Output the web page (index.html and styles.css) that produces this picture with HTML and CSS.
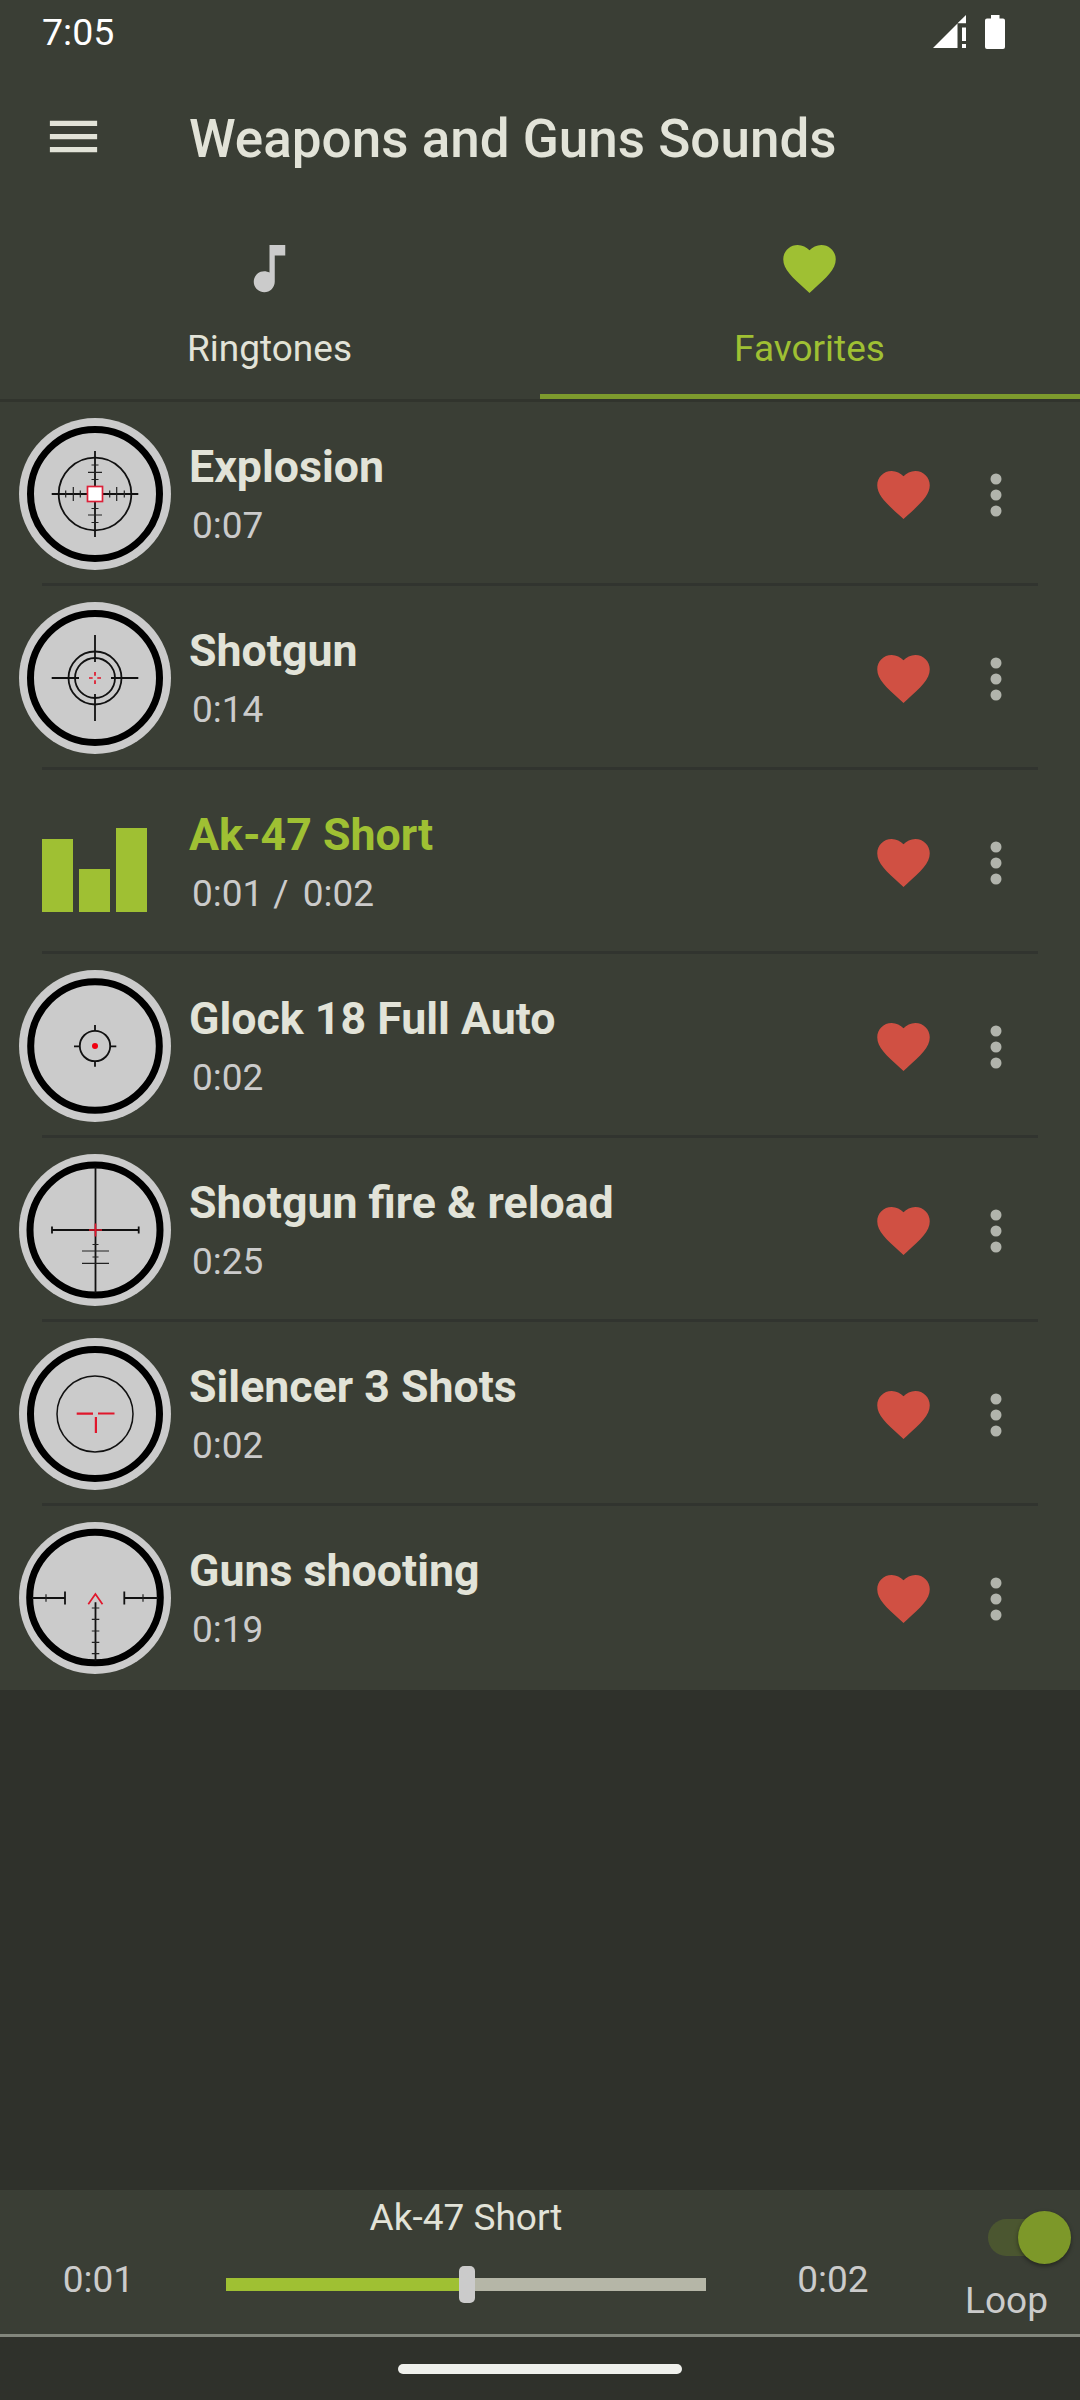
FILE: index.html
```html
<!DOCTYPE html>
<html lang="en">
<head>
<meta charset="utf-8">
<title>Weapons and Guns Sounds</title>
<link rel="stylesheet" href="styles.css">
</head>
<body>
<svg class="defs" width="0" height="0">
  <symbol id="heart" viewBox="0 0 24 24"><path d="M12 21.35l-1.45-1.32C5.4 15.36 2 12.28 2 8.5 2 5.42 4.42 3 7.5 3c1.74 0 3.41.81 4.5 2.09C13.09 3.81 14.76 3 16.5 3 19.58 3 22 5.42 22 8.5c0 3.78-3.4 6.86-8.55 11.54L12 21.35z"/></symbol>
  <symbol id="more" viewBox="0 0 12 44"><circle cx="6" cy="6" r="5.5"/><circle cx="6" cy="22" r="5.5"/><circle cx="6" cy="38" r="5.5"/></symbol>
</svg>

<header class="header">
  <div class="status">
    <span class="clock">7:05</span>
    <div class="status-icons">
      <svg width="33" height="33" viewBox="0 0 33 33"><path d="M0 33L24.500 8.500V33zM24.500 8.200L33 0V8.200zM29 12.500h4v13.500h-4zM29 29h4v4h-4z"/></svg>
      <svg width="20" height="34" viewBox="0 0 20 34"><path d="M6 0h8.500v3.500H18a2 2 0 0 1 2 2V32a2 2 0 0 1-2 2H2a2 2 0 0 1-2-2V5.500a2 2 0 0 1 2-2h4z"/></svg>
    </div>
  </div>
  <div class="appbar">
    <svg class="menu" viewBox="0 0 24 24"><path d="M3 18h18v-2H3v2zm0-5h18v-2H3v2zm0-7v2h18V6H3z"/></svg>
    <h1 class="app-title">Weapons and Guns Sounds</h1>
  </div>
  <nav class="tabs">
    <div class="tab">
      <svg class="tab-icon" viewBox="0 0 24 24"><path d="M12 3v10.55c-.59-.34-1.27-.55-2-.55-2.210 0-4 1.790-4 4s1.790 4 4 4 4-1.790 4-4V7h4V3h-6z"/></svg>
      <span class="tab-label">Ringtones</span>
    </div>
    <div class="tab active">
      <svg class="tab-icon"><use href="#heart"/></svg>
      <span class="tab-label">Favorites</span>
    </div>
  </nav>
</header>

<main class="content">
  <ul class="list">
    <li class="row">
      <svg class="scope" viewBox="-76 -76 152 152">
        <circle class="disc" r="76"/><circle class="ring" r="64.500"/>
        <circle class="ln" r="36.300"/>
        <path class="ln" d="M0-43V43M-43.300 0H43.300"/>
        <path class="thin" d="M-3.500-29h7M-7-21.700h14M-3.500-14.500h7M-3.500 14.500h7M-7 21h14M-3.500 28.500h7M-29.300-3.500v7M-21.700-7v14M-14.700-3.500v7M14.700-3.500v7M21.700-7v14M29.300-3.500v7"/>
        <rect class="box" x="-7.500" y="-7.500" width="15" height="15"/>
      </svg>
      <div class="info"><div class="name">Explosion</div><div class="time">0:07</div></div>
      <svg class="fav"><use href="#heart"/></svg><svg class="more"><use href="#more"/></svg>
    </li>
    <li class="row">
      <svg class="scope" viewBox="-76 -76 152 152">
        <circle class="disc" r="76"/><circle class="ring" r="64.500"/>
        <circle class="ln" r="26.500"/><circle class="ln" r="20"/>
        <path class="ln" d="M0-43V-16M0 16V43M-43.300 0H-16M16 0H43.300"/>
        <path class="red" d="M0-6V-2.300M0 2.300V6M-6 0H-2.300M2.300 0H6"/>
      </svg>
      <div class="info"><div class="name">Shotgun</div><div class="time">0:14</div></div>
      <svg class="fav"><use href="#heart"/></svg><svg class="more"><use href="#more"/></svg>
    </li>
    <li class="row playing">
      <div class="bars"><i class="bar mid"></i><i class="bar low"></i><i class="bar high"></i></div>
      <div class="info"><div class="name">Ak-47 Short</div><div class="time"><span>0:01</span><span class="slash">/</span><span>0:02</span></div></div>
      <svg class="fav"><use href="#heart"/></svg><svg class="more"><use href="#more"/></svg>
    </li>
    <li class="row">
      <svg class="scope" viewBox="-76 -76 152 152">
        <circle class="disc" r="76"/><circle class="ring" r="64.300"/>
        <circle class="ln" r="15.200"/>
        <path class="ln" d="M0-21V-15M0 15V20.700M-21 .3H-15M15 .3H21.300"/>
        <circle class="dot" r="3"/>
      </svg>
      <div class="info"><div class="name">Glock 18 Full Auto</div><div class="time">0:02</div></div>
      <svg class="fav"><use href="#heart"/></svg><svg class="more"><use href="#more"/></svg>
    </li>
    <li class="row">
      <svg class="scope" viewBox="-76 -76 152 152">
        <circle class="disc" r="76"/><circle class="ring" r="65"/>
        <path class="ln" d="M.5-63V63M-43 0H43.700M-43-3.500V3.500M43.700-3.500V3.500"/>
        <path class="thin" d="M-2.500 14.500h6M-13 21h27M-2.500 27h6M-13 33.300h27"/>
        <path class="red" d="M.5-6.500V6.500M-6 0H7"/>
      </svg>
      <div class="info"><div class="name">Shotgun fire &amp; reload</div><div class="time">0:25</div></div>
      <svg class="fav"><use href="#heart"/></svg><svg class="more"><use href="#more"/></svg>
    </li>
    <li class="row">
      <svg class="scope" viewBox="-76 -76 152 152">
        <circle class="disc" r="76"/><circle class="ring" r="64.500"/>
        <circle class="ln hair" r="38"/>
        <path class="red bold" d="M-18.300-.3H-2M3-.5H19.500M.9 3V19"/>
      </svg>
      <div class="info"><div class="name">Silencer 3 Shots</div><div class="time">0:02</div></div>
      <svg class="fav"><use href="#heart"/></svg><svg class="more"><use href="#more"/></svg>
    </li>
    <li class="row">
      <svg class="scope" viewBox="-76 -76 152 152">
        <circle class="disc" r="76"/><circle class="ring" cy="-.5" r="65.300"/>
        <path class="ln" d="M-63 0H-30M-30-6.500V6.500M29.300-6.500V6.500M29.300 0H63M.5 4.300V63"/>
        <path class="thin" d="M-49-3.700V3.700M48-3.700V3.700M-3.200 10h7.500M-3.200 21.400h7.500M-3.200 33h7.500M-3.200 44.300h7.500M-3.200 55.700h7.500"/>
        <path class="red" d="M-6.700 6.300L.4-4L7.500 6.300"/>
      </svg>
      <div class="info"><div class="name">Guns shooting</div><div class="time">0:19</div></div>
      <svg class="fav"><use href="#heart"/></svg><svg class="more"><use href="#more"/></svg>
    </li>
  </ul>
</main>

<footer class="player">
  <div class="elapsed">0:01</div>
  <div class="track">
    <div class="track-name">Ak-47 Short</div>
    <div class="slider"><div class="filled"></div><div class="knob"></div><div class="rest"></div></div>
  </div>
  <div class="total">0:02</div>
  <div class="loop">
    <div class="switch"><div class="thumb"></div></div>
    <div class="loop-label">Loop</div>
  </div>
</footer>
<div class="gesture"><div class="pill"></div></div>
</body>
</html>
```
FILE: styles.css
```css
* { box-sizing: border-box; }

body {
  margin: 0;
  width: 1080px;
  height: 2400px;
  display: flex;
  flex-direction: column;
  background: #2f312b;
  color: #e2e3d8;
  font-family: Roboto, "Liberation Sans", sans-serif;
  font-size: 37px;
  overflow: hidden;
}

svg { display: block; flex: none; }
.defs { position: absolute; }

.header { background: #3a3e35; border-bottom: 3px solid #31342d; }

.status {
  height: 63px;
  padding: 0 75px 0 42px;
  display: flex;
  align-items: center;
  justify-content: space-between;
  color: #fff;
  font-size: 37.5px;
}
.status-icons { display: flex; gap: 19px; align-items: center; fill: #fff; }

.appbar { height: 147px; padding-left: 42px; display: flex; align-items: center; }
.menu { width: 63px; height: 63px; fill: #e2e3d8; }
.app-title { margin: 4px 0 0 84px; font-size: 53px; font-weight: 500; line-height: 62px; }

.tabs { height: 189px; display: flex; }
.tab {
  flex: 1;
  padding: 27px 1px 0 0;
  display: flex;
  flex-direction: column;
  align-items: center;
  fill: #cbcbcb;
  border-bottom: 5px solid transparent;
}
.tab.active { color: #9fc033; fill: #9fc033; border-color: #7d9a2d; }
.tab-icon { width: 63px; height: 63px; }
.tab-label { margin-top: 27px; line-height: 43px; }

.content { flex: 1; }
.list { margin: 0; padding: 0; list-style: none; background: #3a3e35; }
.row {
  height: 184px;
  padding: 0 78px 0 19px;
  display: flex;
  align-items: center;
  background: linear-gradient(#31342f, #31342f) 42px 100% / 996px 3px no-repeat;
}
.row:last-child { background: none; }

.scope { width: 152px; height: 152px; fill: none; }
.disc { fill: #cbcbcb; }
.ring { stroke: #000; stroke-width: 7; }
.ln { stroke: #111; stroke-width: 1.8; }
.hair { stroke-width: 1.5; }
.thin { stroke: #222; stroke-width: 1.2; }
.red { stroke: #e0162b; stroke-width: 1.7; }
.bold { stroke-width: 2.2; }
.box { fill: #fff; stroke: #dc2038; stroke-width: 1.7; }
.dot { fill: #f00010; }

.info { flex: 1; align-self: flex-start; padding: 39px 0 0 18px; }
.name { font-size: 44.7px; line-height: 52px; font-weight: 700; }
.time { margin-top: 11px; padding-left: 3px; line-height: 43px; color: #cbcbcb; display: flex; }
.slash { margin: 0 14px 0 10px; }
.playing .name { color: #9fc033; }

.bars { width: 152px; margin-top: 16px; padding-left: 23px; display: flex; align-items: flex-end; gap: 6px; }
.bar { width: 31px; background: #9fc033; }
.mid { height: 73px; }
.low { height: 43px; }
.high { height: 84px; }

.fav { width: 63px; height: 63px; fill: #d05043; }
.more { width: 12px; height: 44px; margin: 1px 0 0 55px; fill: #b1b4ac; }

.player {
  height: 147px;
  display: grid;
  grid-template-columns: 226px 480px 254px 120px;
  background: #3a3e35;
  border-bottom: 3px solid #82867c;
  line-height: 44px;
  text-align: center;
  color: #cbcbcb;
}
.elapsed { padding: 68px 29px 0 0; }
.total { padding-top: 68px; }
.track { padding-top: 6px; color: #e2e3d8; }
.slider { height: 37px; margin-top: 26px; display: flex; align-items: center; }
.filled { width: 233px; height: 13px; background: #9fc033; }
.knob { width: 16px; height: 37px; border-radius: 5px; background: #cbcbcb; }
.rest { flex: 1; height: 13px; background: #b5b6a7; }
.loop { padding: 21px 9px 0 0; display: flex; flex-direction: column; align-items: flex-end; }
.switch {
  width: 83px;
  height: 37px;
  margin: 8px 0;
  display: flex;
  align-items: center;
  justify-content: flex-end;
  border-radius: 18.5px;
  background: linear-gradient(#4b5630, #4b5630) 0 0 / 60px 100% no-repeat;
}
.thumb { flex: none; width: 53px; height: 53px; border-radius: 50%; background: #7d9829; box-shadow: 0 2px 4px rgba(0, 0, 0, .4); }
.loop-label { margin: 15px 23px 0 0; }

.gesture { height: 63px; padding-top: 27px; display: flex; justify-content: center; }
.pill { width: 284px; height: 10px; border-radius: 5px; background: #eff0ec; }
```
